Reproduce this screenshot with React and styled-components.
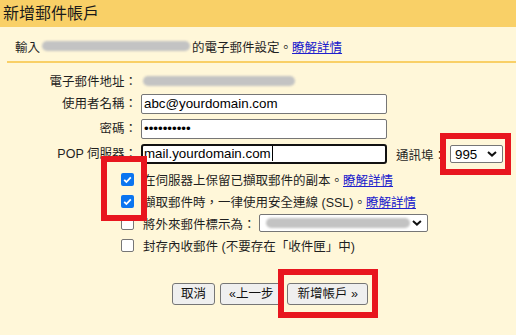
import styled, { createGlobalStyle } from "styled-components"

const GlobalStyle = createGlobalStyle`
  body {
    margin: 0;
    background: #fff7d9;
    font-family: "Liberation Sans", "Noto Sans CJK TC", sans-serif;
    color: #1f1f1f;
  }
`

const Page = styled.div`
  width: 516px;
  height: 335px;
  overflow: hidden;
  background: #fff7d9;
`

const Header = styled.div`
  height: 27px;
  background: #f9d067;
  padding-left: 3px;
  font-size: 16px;
  line-height: 27px;
  color: #1a1a1a;
`

const Intro = styled.div`
  margin-left: 7px;
  padding: 4px 0 0 8px;
  height: 30px;
  border-bottom: 2px solid #f9d067;
  font-size: 12.5px;
  display: flex;
  align-items: center;
  white-space: nowrap;
`

const Blur = styled.span`
  display: inline-block;
  width: ${p => p.$w}px;
  height: 10px;
  margin: 0 2px;
  border-radius: 5px;
  background: #c3c3c3;
  filter: blur(1.1px);
`

const Link = styled.a`
  color: #2020cc;
  text-decoration: underline;
  cursor: pointer;
`

const Form = styled.div`
  display: grid;
  grid-template-columns: 137px auto;
  column-gap: 4px;
  row-gap: 5px;
  padding-top: 12px;
  align-items: center;
  font-size: 12.5px;
`

const Label = styled.div`
  text-align: right;
  line-height: 14px;
  white-space: nowrap;
`

const Field = styled.div`
  width: 246px;
  height: 20px;
  box-sizing: border-box;
  border: ${p => (p.$focused ? "2px solid #111" : "1px solid #767676")};
  border-radius: ${p => (p.$focused ? "3px" : "2px")};
  padding-left: ${p => (p.$focused ? "1px" : "2px")};
  line-height: ${p => (p.$focused ? "16px" : "18px")};
  background: #fff;
  font-family: "Liberation Sans", sans-serif;
  font-size: 13.33px;
  color: #000;
  white-space: nowrap;
  overflow: hidden;
`

const Caret = styled.span`
  display: inline-block;
  width: 1px;
  height: 15px;
  margin-left: 1px;
  background: #000;
  vertical-align: -3px;
`

const PopRow = styled.div`
  display: flex;
  align-items: center;
  white-space: nowrap;
`

const PortLabel = styled.span`
  margin-left: 9px;
  margin-right: 4px;
`

const Marked = styled.span`
  position: relative;
  display: inline-flex;
`

const Highlight = styled.span`
  position: absolute;
  top: ${p => p.$top}px;
  bottom: ${p => p.$bottom}px;
  left: ${p => p.$left}px;
  right: ${p => p.$right}px;
  border: 6px solid #e8161f;
  pointer-events: none;
  z-index: 2;
`

const Select = styled.div`
  width: ${p => p.$w}px;
  height: 18px;
  box-sizing: border-box;
  border: 1px solid #767676;
  border-radius: 2px;
  background: #fff;
  display: flex;
  align-items: center;
  justify-content: space-between;
  padding: 0 5px 0 4px;
  margin-left: ${p => p.$ml || 0}px;
  font-family: "Liberation Sans", sans-serif;
  font-size: 13.33px;
  color: #000;
`

const Options = styled.div`
  position: relative;
  margin-top: 4px;
  padding-left: 121px;
  display: flex;
  flex-direction: column;
  font-size: 12.5px;
`

const OptionRow = styled.div`
  height: 22px;
  display: flex;
  align-items: center;
  white-space: nowrap;
`

const Check = styled.span`
  width: 13px;
  height: 13px;
  box-sizing: border-box;
  margin-right: 9px;
  border-radius: 2px;
  flex: none;
  display: flex;
  align-items: center;
  justify-content: center;
  background: ${p => (p.$checked ? "#0b75f0" : "#fff")};
  border: ${p => (p.$checked ? "none" : "1px solid #767676")};
`

const Buttons = styled.div`
  display: flex;
  gap: 5px;
  margin-top: 27px;
  padding-left: 172px;
`

const Button = styled.button`
  height: 22px;
  box-sizing: border-box;
  padding: 0 ${p => p.$pad || 8}px;
  border: 1px solid #767676;
  border-radius: 3px;
  background: #efefef;
  font-family: "Liberation Sans", "Noto Sans CJK TC", sans-serif;
  font-size: 12.5px;
  line-height: 20px;
  color: #111;
  white-space: nowrap;
`

const Chevron = () => (
  <svg width="10" height="6" viewBox="0 0 10 6">
    <path d="M1 1l4 3.6L9 1" fill="none" stroke="#111" strokeWidth="2" />
  </svg>
)

const Tick = () => (
  <svg width="11" height="11" viewBox="0 0 11 11">
    <path d="M2.2 5.8l2.2 2.2 4.4-4.6" fill="none" stroke="#fff" strokeWidth="1.8" />
  </svg>
)

const App = () => {
  return (
    <Page>
      <GlobalStyle />
      <Header>新增郵件帳戶</Header>
      <Intro>
        輸入 <Blur $w={148} /> 的電子郵件設定。<Link>瞭解詳情</Link>
      </Intro>
      <Form>
        <Label>電子郵件地址：</Label>
        <div><Blur $w={152} /></div>
        <Label>使用者名稱：</Label>
        <Field>abc@yourdomain.com</Field>
        <Label>密碼：</Label>
        <Field>••••••••••</Field>
        <Label>POP 伺服器：</Label>
        <PopRow>
          <Field $focused>mail.yourdomain.com<Caret /></Field>
          <PortLabel>通訊埠：</PortLabel>
          <Marked>
            <Select $w={53}>995<Chevron /></Select>
            <Highlight $top={-12} $bottom={-12} $left={-10} $right={-8} />
          </Marked>
        </PopRow>
      </Form>
      <Options>
        <Highlight $top={-12} $left={101} style={{ width: 46, height: 65, boxSizing: "border-box" }} />
        <OptionRow>
          <Check $checked><Tick /></Check>
          在伺服器上保留已擷取郵件的副本。<Link>瞭解詳情</Link>
        </OptionRow>
        <OptionRow>
          <Check $checked><Tick /></Check>
          擷取郵件時，一律使用安全連線 (SSL)。<Link>瞭解詳情</Link>
        </OptionRow>
        <OptionRow>
          <Check />
          將外來郵件標示為：
          <Select $w={169} $ml={3}><Blur $w={146} /><Chevron /></Select>
        </OptionRow>
        <OptionRow>
          <Check />
          封存內收郵件 (不要存在「收件匣」中)
        </OptionRow>
      </Options>
      <Buttons>
        <Button>取消</Button>
        <Button>«上一步</Button>
        <Marked>
          <Button $pad={9}>新增帳戶 »</Button>
          <Highlight $top={-14} $bottom={-13} $left={-9} $right={-10} />
        </Marked>
      </Buttons>
    </Page>
  )
}

export default App
